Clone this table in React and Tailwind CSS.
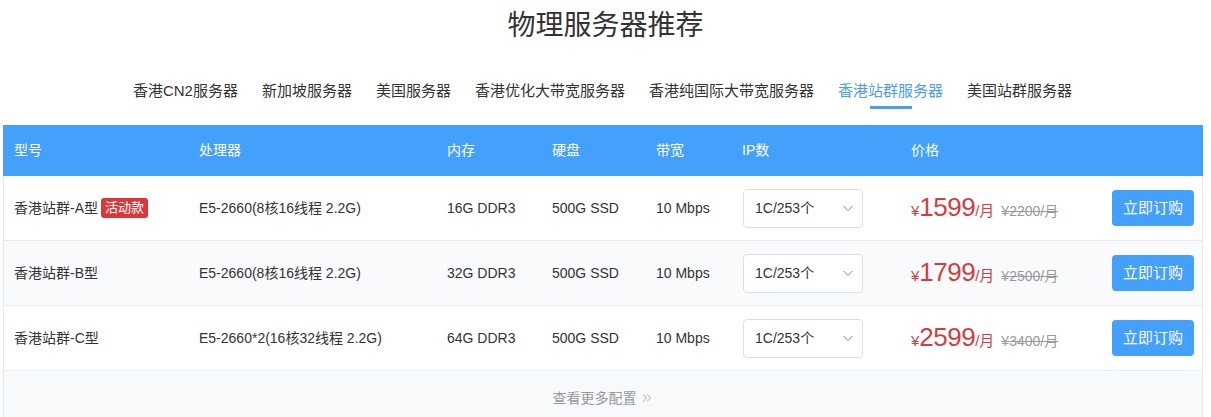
import React, { useState } from 'react';

const tabs = [
  '香港CN2服务器',
  '新加坡服务器',
  '美国服务器',
  '香港优化大带宽服务器',
  '香港纯国际大带宽服务器',
  '香港站群服务器',
  '美国站群服务器',
];

const servers = [
  { name: '香港站群-A型', hot: true, cpu: 'E5-2660(8核16线程 2.2G)', ram: '16G DDR3', disk: '500G SSD', bw: '10 Mbps', ip: '1C/253个', price: '1599', old: '2200' },
  { name: '香港站群-B型', hot: false, cpu: 'E5-2660(8核16线程 2.2G)', ram: '32G DDR3', disk: '500G SSD', bw: '10 Mbps', ip: '1C/253个', price: '1799', old: '2500' },
  { name: '香港站群-C型', hot: false, cpu: 'E5-2660*2(16核32线程 2.2G)', ram: '64G DDR3', disk: '500G SSD', bw: '10 Mbps', ip: '1C/253个', price: '2599', old: '3400' },
];

const cols = 'grid grid-cols-[185px_248px_105px_104px_86px_169px_201px_82px] items-center';

const App = () => {
  const [activeTab, setActiveTab] = useState(5);

  return (
    <div className="w-[1211px] h-[417px] overflow-hidden bg-white font-['Liberation_Sans','Noto_Sans_CJK_SC',sans-serif] text-[#333]">
      {/* Title */}
      <h2 className="text-center text-[28px] leading-[28px] pt-[12px] text-[#333]">物理服务器推荐</h2>

      {/* Tabs */}
      <div className="flex justify-center gap-6 mt-[43px] pr-[6px]">
        {tabs.map((t, i) => (
          <button
            key={t}
            onClick={() => setActiveTab(i)}
            className={`relative text-[15px] leading-[15px] ${i === activeTab ? 'text-[#4a9ded]' : 'text-[#333]'}`}
          >
            {t}
            {i === activeTab && (
              <span className="absolute left-1/2 -translate-x-1/2 top-[23px] w-[42px] h-[3px] bg-[#4a9ded]" />
            )}
          </button>
        ))}
      </div>

      {/* Table */}
      <div className="mx-[3px] mt-[27px] w-[1200px] border-x border-[#eaeaea]">
        <div className={`${cols} h-[51px] pl-[11px] pr-[9px] bg-[#43a0fb] text-white text-[14px] -mx-px`}>
          <div>型号</div>
          <div>处理器</div>
          <div>内存</div>
          <div>硬盘</div>
          <div>带宽</div>
          <div>IP数</div>
          <div>价格</div>
          <div />
        </div>

        {servers.map((s, i) => (
          <div
            key={s.name}
            className={`${cols} h-[65px] pl-[10px] pr-[8px] text-[14px] border-b border-[#ececec] ${i === 1 ? 'bg-[#f9fafc]' : 'bg-white'}`}
          >
            <div className="flex items-center">
              <span>{s.name}</span>
              {s.hot && (
                <span className="ml-[3px] px-[4px] h-[20px] leading-[20px] rounded-[3px] bg-[#d9383a] text-white text-[13px]">活动款</span>
              )}
            </div>
            <div>{s.cpu}</div>
            <div>{s.ram}</div>
            <div>{s.disk}</div>
            <div>{s.bw}</div>
            <div>
              <div className="w-[120px] h-[39px] ml-px border border-[#dcdfe6] rounded-[4px] bg-white flex items-center justify-between pl-[11px] pr-[8px]">
                <span>{s.ip}</span>
                <svg width="12" height="12" viewBox="0 0 12 12" fill="none" stroke="#888" strokeWidth="1">
                  <path d="M1.5 4l4.5 4.5L10.5 4" />
                </svg>
              </div>
            </div>
            <div className="flex items-baseline text-[#d43d3f]">
              <span className="text-[15px]">¥</span>
              <span className="text-[26px] leading-none tracking-[-0.5px]">{s.price}</span>
              <span className="text-[15px]">/月</span>
              <span className="ml-[7px] text-[14px] text-[#999] line-through">¥{s.old}/月</span>
            </div>
            <div>
              <button className="w-[82px] h-[36px] rounded-[4px] bg-[#43a0fb] text-white text-[15px]">立即订购</button>
            </div>
          </div>
        ))}

        <div className="h-[46px] bg-[#f8f9fb] flex items-center justify-center text-[14px] text-[#999] pr-[2px] pt-[8px]">
          查看更多配置
          <svg className="ml-[5px]" width="10" height="10" viewBox="0 0 10 10" fill="none" stroke="#aaa" strokeWidth="1">
            <path d="M1 1.5L4.5 5L1 8.5M5 1.5L8.5 5L5 8.5" />
          </svg>
        </div>
      </div>
    </div>
  );
};

export default App;
